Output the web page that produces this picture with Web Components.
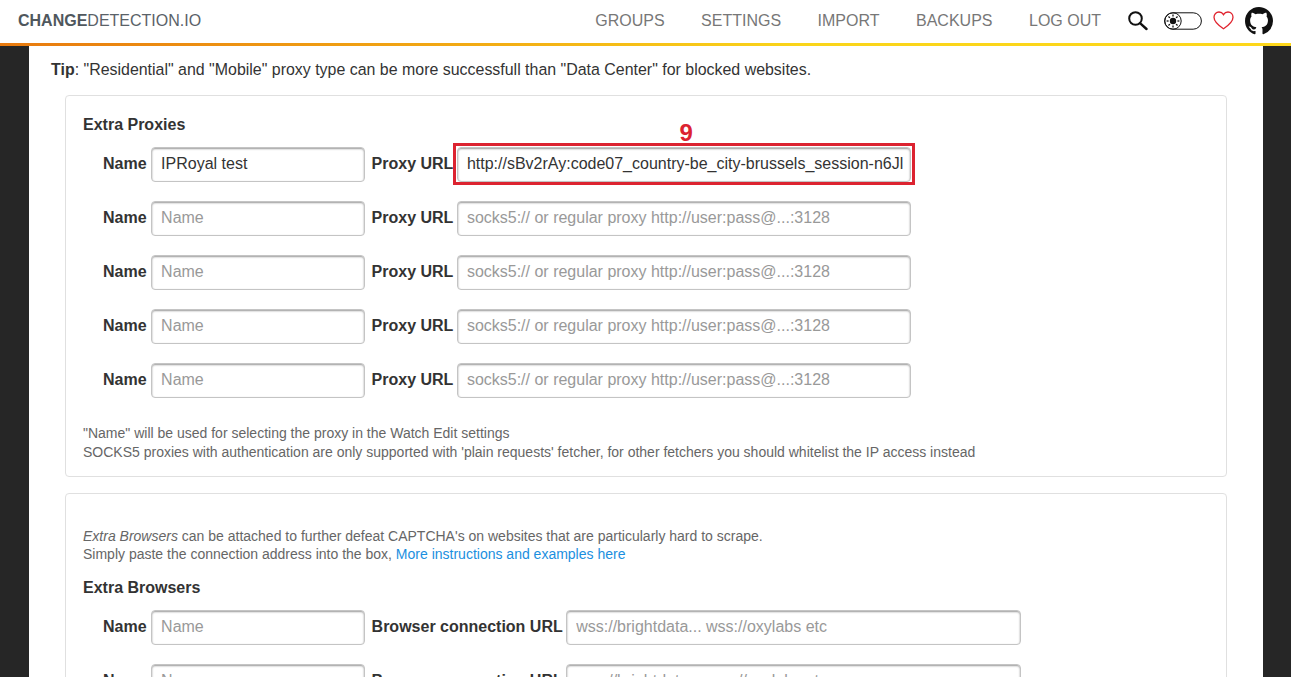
<!DOCTYPE html>
<html>
<head>
<meta charset="utf-8">
<title>changedetection.io</title>
<style>
	html, body { margin: 0; height: 100%; overflow: hidden; background: #262626; }
	body { font-family: "Liberation Sans", Arial, sans-serif; color: #333; }
</style>
</head>
<body>
<app-header></app-header>
<page-content>
	<p class="tip"><b>Tip</b>: "Residential" and "Mobile" proxy type can be more successfull than "Data Center" for blocked websites.</p>

	<panel-box heading="Extra Proxies">
		<field-row label="Proxy URL" value="IPRoyal test" url="http://sBv2rAy:code07_country-be_city-brussels_session-n6JlzK" marked="9"></field-row>
		<field-row label="Proxy URL" placeholder="socks5:// or regular proxy http://user:pass@...:3128"></field-row>
		<field-row label="Proxy URL" placeholder="socks5:// or regular proxy http://user:pass@...:3128"></field-row>
		<field-row label="Proxy URL" placeholder="socks5:// or regular proxy http://user:pass@...:3128"></field-row>
		<field-row label="Proxy URL" placeholder="socks5:// or regular proxy http://user:pass@...:3128"></field-row>
		<span slot="note">"Name" will be used for selecting the proxy in the Watch Edit settings<br>SOCKS5 proxies with authentication are only supported with 'plain requests' fetcher, for other fetchers you should whitelist the IP access instead</span>
	</panel-box>

	<panel-box heading="Extra Browsers">
		<span slot="intro"><i>Extra Browsers</i> can be attached to further defeat CAPTCHA's on websites that are particularly hard to scrape.<br>Simply paste the connection address into the box, <a href="#">More instructions and examples here</a></span>
		<field-row label="Browser connection URL" placeholder="wss://brightdata... wss://oxylabs etc"></field-row>
		<field-row label="Browser connection URL" placeholder="wss://brightdata... wss://oxylabs etc"></field-row>
	</panel-box>
</page-content>

<script>
class AppHeader extends HTMLElement {
	constructor() {
		super();
		this.shadow = this.attachShadow({ mode: "open" });
	}

	connectedCallback() {
		const links = ["GROUPS", "SETTINGS", "IMPORT", "BACKUPS", "LOG OUT"];

		// eight short rays around the sun in the theme toggle
		const rays = [0, 45, 90, 135, 180, 225, 270, 315]
			.map((angle) => `<path d="M9 2.600V4.600" transform="rotate(${angle} 9 9)"/>`)
			.join("");

		this.shadow.innerHTML = `
			<style>
				:host {
					display: flex;
					align-items: center;
					box-sizing: border-box;
					height: 46px;
					padding: 0 18px 2px 18px;
					background: #fff;
					border-bottom: 3px solid;
					border-image: linear-gradient(to right, #e87a0f 0%, #f3ae14 39%, #fad51a 62%, #fed71a 100%) 1;
				}
				.logo {
					font-size: 16px;
					color: #5a6268;
					margin-right: auto;
				}
				.logo b { color: #4f575d; }
				a {
					font-size: 16px;
					color: #777;
					text-decoration: none;
					margin-right: 36.500px;
				}
				svg { display: block; flex: none; }
				.search { margin: 0 16px 0 -9.500px; }
				.toggle { margin-right: 11px; }
				.heart { margin-right: 11px; }
			</style>
			<span class="logo"><b>CHANGE</b>DETECTION.IO</span>
			${links.map((link) => `<a href="#">${link}</a>`).join("")}
			<svg class="search" width="20" height="20" viewBox="0 0 20 20" fill="none" stroke="#111" stroke-width="2">
				<circle cx="7.500" cy="7.500" r="6.300"/>
				<path d="M12.300 12.300 18.500 18" stroke-linecap="round" stroke-width="2.400"/>
			</svg>
			<svg class="toggle" width="38" height="18" viewBox="0 0 38 18" fill="none" stroke="#111">
				<rect x="0.600" y="0.800" width="36.800" height="16.400" rx="8.200"/>
				<circle cx="9" cy="9" r="8.200"/>
				<circle cx="9" cy="9" r="3.200" fill="#111" stroke="none"/>
				<g stroke-width="1.300">${rays}</g>
			</svg>
			<svg class="heart" width="21" height="19" viewBox="0 0 21 19" fill="none" stroke="#e0232e" stroke-width="1.300">
				<path d="M10.500 17.800C7.500 15.800 1 11.500 1 6.300 1 3.200 3.300 1 6 1c1.900 0 3.500 .9 4.500 2.600C11.500 1.900 13.100 1 15 1c2.700 0 5 2.200 5 5.300 0 5.200-6.500 9.500-9.500 11.500z"/>
			</svg>
			<svg class="github" width="28" height="28" viewBox="0 0 16 16" fill="#111">
				<path d="M8 0C3.580 0 0 3.580 0 8c0 3.540 2.290 6.530 5.470 7.590.4.070.55-.17.55-.38 0-.19-.01-.82-.01-1.490-2.010.37-2.530-.49-2.690-.94-.09-.23-.48-.94-.82-1.130-.28-.15-.68-.52-.01-.53.63-.01 1.080.58 1.230.82.72 1.210 1.870.87 2.330.66.070-.52.28-.87.51-1.070-1.780-.2-3.640-.89-3.640-3.950 0-.87.31-1.590.82-2.150-.08-.2-.36-1.020.08-2.120 0 0 .67-.21 2.200.82.64-.18 1.320-.27 2-.27s1.360.09 2 .27c1.530-1.040 2.200-.82 2.200-.82.44 1.100.16 1.920.08 2.120.51.56.82 1.270.82 2.150 0 3.070-1.870 3.750-3.650 3.950.29.25.54.73.54 1.480 0 1.070-.01 1.930-.01 2.200 0 .21.15.46.55.38A8.010 8.010 0 0 0 16 8c0-4.420-3.580-8-8-8z"/>
			</svg>`;
	}
}

class PageContent extends HTMLElement {
	constructor() {
		super();
		this.shadow = this.attachShadow({ mode: "open" });
		this.shadow.innerHTML = `
			<style>
				:host {
					display: block;
					box-sizing: border-box;
					margin: 0 28px 0 29px;
					padding: 14px 36px 0;
					background: #fff;
					height: 800px;
				}
				::slotted(.tip) {
					margin: 0 0 16px -14px;
					font-size: 15.940px;
					line-height: 19px;
				}
			</style>
			<slot></slot>`;
	}
}

class PanelBox extends HTMLElement {
	constructor() {
		super();
		this.shadow = this.attachShadow({ mode: "open" });
	}

	connectedCallback() {
		const hasIntro = this.querySelector('[slot="intro"]');
		const hasNote = this.querySelector('[slot="note"]');

		this.shadow.innerHTML = `
			<style>
				:host {
					display: block;
					box-sizing: border-box;
					margin-bottom: 16px;
					padding: 19px 17px 14px;
					border: 1px solid #e0e0e0;
					border-radius: 4px;
				}
				h4 {
					margin: 0 0 13px;
					font-size: 16px;
					line-height: 19px;
					color: #333;
				}
				.intro, .note {
					font-size: 14px;
					color: #666;
				}
				.intro { margin: 14px 0 15px; line-height: 18px; }
				.note { margin-top: 26px; line-height: 19px; }
				.rows { display: grid; row-gap: 19px; }
			</style>
			${hasIntro ? '<div class="intro"><slot name="intro"></slot></div>' : ""}
			<h4>${this.getAttribute("heading")}</h4>
			<div class="rows"><slot></slot></div>
			${hasNote ? '<div class="note"><slot name="note"></slot></div>' : ""}`;

		// the link sits inside the slotted span, ::slotted can't reach it
		this.querySelectorAll("a").forEach((link) => {
			link.style.color = "#1b8fe0";
			link.style.textDecoration = "none";
		});
	}
}

class FieldRow extends HTMLElement {
	constructor() {
		super();
		this.shadow = this.attachShadow({ mode: "open" });
	}

	connectedCallback() {
		const wide = this.getAttribute("label").length > 10;
		const marked = this.getAttribute("marked");
		const value = this.getAttribute("value") || "";
		const url = this.getAttribute("url") || "";
		const placeholder = this.getAttribute("placeholder") || "";

		this.shadow.innerHTML = `
			<style>
				:host {
					display: flex;
					align-items: center;
					height: 35px;
					padding-left: 20px;
					font-size: 16px;
				}
				label { font-weight: bold; color: #333; margin-top: -2px; }
				input {
					box-sizing: border-box;
					height: 35px;
					margin-left: 4px;
					padding: 0 7px 2px 8.500px;
					border: 1px solid #c4c4c4;
					border-radius: 4px;
					box-shadow: inset 0 1px 2px #999;
					font: 16px "Liberation Sans", Arial, sans-serif;
					color: #333;
					outline: none;
				}
				input::placeholder { color: #999; opacity: 1; }
				.name { width: 214px; margin-right: 7px; padding-left: 9.500px; }
				.url { width: 454px; }
				.url.wide { width: 455px; margin-left: 3px; padding-left: 9.500px; }
				.wrap { position: relative; display: flex; }
				.mark {
					position: absolute;
					left: 0;
					top: -4px;
					right: -4px;
					bottom: -3px;
					border: 3px solid #dc2330;
					pointer-events: none;
				}
				.num {
					position: absolute;
					top: -27px;
					left: 226px;
					font-size: 24px;
					line-height: 25px;
					font-weight: bold;
					color: #dc2330;
				}
			</style>
			<label>Name</label>
			<input class="name" value="${value}" placeholder="${value ? "" : "Name"}">
			<label>${this.getAttribute("label")}</label>
			<div class="wrap">
				<input class="url${wide ? " wide" : ""}" value="${url}" placeholder="${placeholder}">
				${marked ? `<div class="mark"></div><div class="num">${marked}</div>` : ""}
			</div>`;
	}
}

customElements.define("app-header", AppHeader);
customElements.define("page-content", PageContent);
customElements.define("panel-box", PanelBox);
customElements.define("field-row", FieldRow);
</script>
</body>
</html>
